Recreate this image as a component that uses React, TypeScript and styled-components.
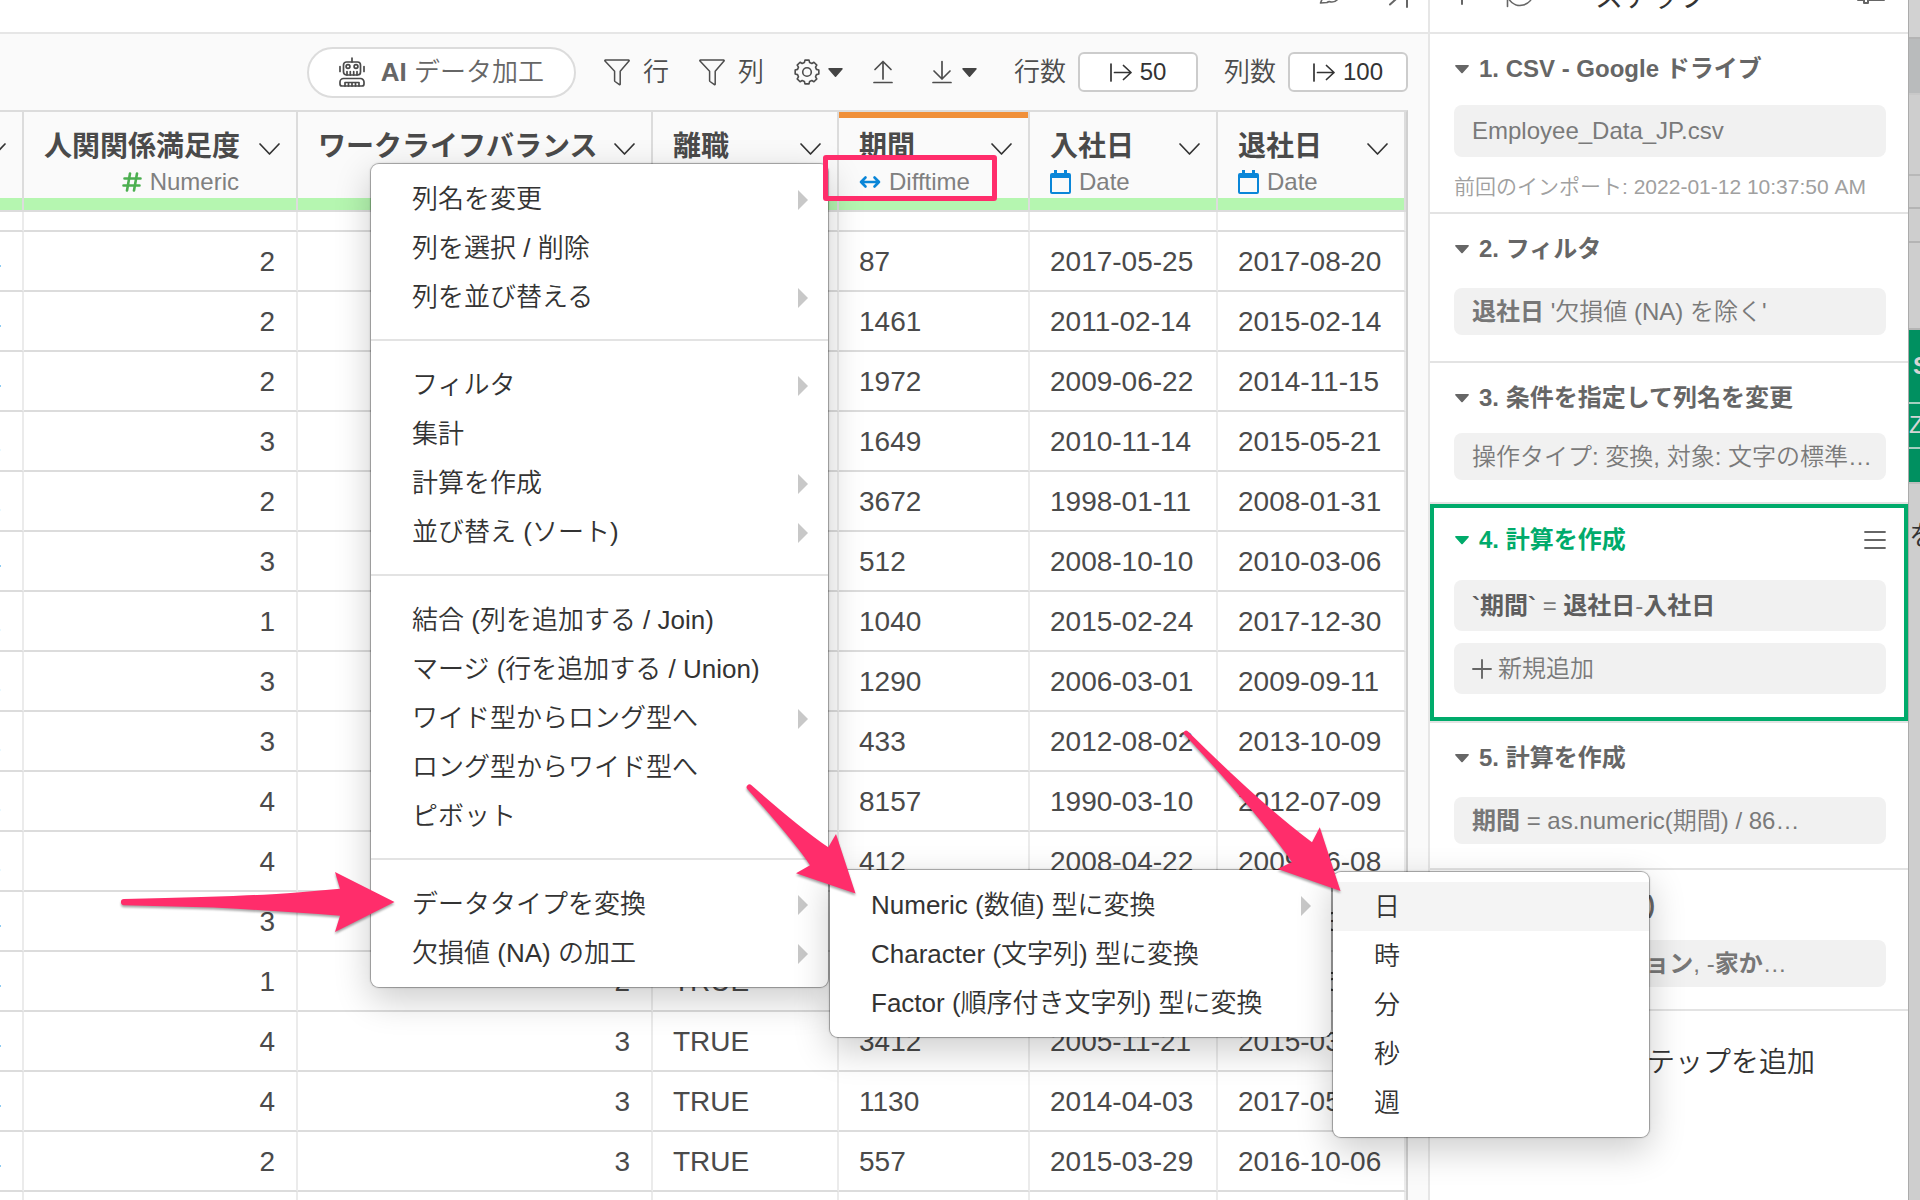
import React from "react";
import styled, { createGlobalStyle, css } from "styled-components";

const FONT = `"Liberation Sans", "Noto Sans CJK JP", sans-serif`;
const PINK = "#ff2d6b";
const GREEN = "#00ab6b";

const GlobalStyle = createGlobalStyle`
  *, *::before, *::after { box-sizing: border-box; }
  body { margin: 0; overflow: hidden; font-family: ${FONT}; font-weight: 350; background: #fff; }
  button { font: inherit; color: inherit; background: none; border: 0; padding: 0; text-align: left; cursor: pointer; }
  b { font-weight: 700; }
  ul { list-style: none; margin: 0; padding: 0; }
  svg { display: block; flex: none; }
`;

/* ---------- page frame ---------- */

const Page = styled.div`
  position: relative;
  display: flex;
  height: 100vh;
  overflow: hidden;
`;

const Main = styled.main`
  flex: 1;
  min-width: 0;
  display: flex;
  flex-direction: column;
  border-right: 2px solid #e6e6e6;
  background: #fafafa;
`;

const TopBar = styled.header<{ $spread?: boolean }>`
  flex: none;
  display: flex;
  align-items: flex-end;
  justify-content: ${(p) => (p.$spread ? "space-between" : "flex-end")};
  gap: ${(p) => (p.$spread ? 36 : 46)}px;
  height: 34px;
  padding: 0 ${(p) => (p.$spread ? 22 : 20)}px 20px 20px;
  overflow: hidden;
  background: #fff;
  border-bottom: 2px solid #e6e6e6;
  color: #666;
`;

const PanelTitle = styled.h2`
  flex: 1;
  margin: 0;
  padding-left: 25px;
  font-size: 28px;
  line-height: 28px;
  font-weight: 400;
  color: #333;
`;

/* ---------- toolbar ---------- */

const Toolbar = styled.div`
  flex: none;
  display: flex;
  align-items: center;
  justify-content: flex-end;
  gap: 26px;
  height: 76px;
  padding-right: 20px;
  font-size: 26px;
  line-height: 40px;
  color: #4d4d4d;
  white-space: nowrap;
`;

const Pill = styled.button`
  display: flex;
  align-items: center;
  gap: 16px;
  height: 51px;
  padding: 0 30px;
  background: #fff;
  border: 2px solid #dcdcdc;
  border-radius: 26px;
  color: #666;
`;

const ToolButton = styled.button<{ $wide?: boolean }>`
  display: flex;
  align-items: center;
  gap: ${(p) => (p.$wide ? 10 : 8)}px;
  padding: 0 ${(p) => (p.$wide ? 11 : 2)}px;
`;

const FilterButton = styled(ToolButton)`
  gap: 13px;
`;

const CountField = styled.div`
  display: flex;
  align-items: center;
  gap: 12px;
`;

const CountButton = styled.button`
  display: flex;
  align-items: center;
  justify-content: center;
  gap: 8px;
  width: 120px;
  height: 40px;
  background: #fff;
  border: 2px solid #ccc;
  border-radius: 6px;
  font-size: 24px;
  line-height: 36px;
  color: #333;
`;

/* ---------- data table ---------- */

const TableFrame = styled.div`
  flex: 1;
  min-height: 0;
  display: flex;
  justify-content: flex-end;
  margin-right: 20px;
  overflow: hidden;
  border-top: 2px solid #dcdcdc;
  border-right: 2px solid #d0d0d0;
`;

const DataTable = styled.table`
  flex: none;
  align-self: flex-start;
  table-layout: fixed;
  width: 1656px;
  border-collapse: separate;
  border-spacing: 0;
  background: #fff;
  color: #4a4a4a;
`;

const HeadCell = styled.th`
  padding: 0;
  background: #fafafa;
  border-right: 2px solid #dcdcdc;
  border-bottom: 2px solid #dcdcdc;
  font-weight: inherit;
`;

const HeadBody = styled.div<{ $active?: boolean; $right?: boolean }>`
  display: flex;
  gap: 20px;
  height: 86px;
  padding: 11px 16px 0 20px;
  border-top: 6px solid ${(p) => (p.$active ? "#f0903a" : "transparent")};
  text-align: ${(p) => (p.$right ? "right" : "left")};
  white-space: nowrap;
`;

const HeadText = styled.div`
  flex: 1;
  min-width: 0;
`;

const ColumnName = styled.div`
  font-size: 28px;
  line-height: 36px;
  font-weight: 700;
`;

const ColumnType = styled.div<{ $right?: boolean }>`
  display: flex;
  align-items: center;
  justify-content: ${(p) => (p.$right ? "flex-end" : "flex-start")};
  gap: 8px;
  margin-top: 3px;
  font-size: 24px;
  line-height: 28px;
  color: #808080;
`;

const HeadMenuButton = styled.button`
  align-self: flex-start;
  padding-top: 14px;
`;

const FillBar = styled.div`
  height: 12px;
  background: #b5f6b0;
`;

const Cell = styled.td<{ $right?: boolean; $short?: boolean }>`
  height: ${(p) => (p.$short ? 20 : 60)}px;
  padding: ${(p) => (p.$short ? 0 : 2)}px 21px 0 20px;
  border-right: 2px solid #ebebeb;
  border-bottom: 2px solid #dcdcdc;
  font-size: 28px;
  line-height: 32px;
  text-align: ${(p) => (p.$right ? "right" : "left")};
  white-space: nowrap;
`;

/* ---------- steps panel ---------- */

const Panel = styled.aside`
  flex: none;
  display: flex;
  flex-direction: column;
  width: 478px;
  background: #fff;
  color: #666;
`;

const Step = styled.section<{ $gap: number; $bottom: number; $selected?: boolean }>`
  display: flex;
  flex-direction: column;
  padding: ${(p) => (p.$selected ? 18 : 17)}px 22px ${(p) => p.$bottom}px 24px;
  border-bottom: 2px solid #e3e3e3;
  ${(p) =>
    p.$selected &&
    css`
      box-shadow: inset 0 0 0 4px ${GREEN};
    `}
  & > ul {
    margin-top: ${(p) => p.$gap}px;
  }
`;

const StepHead = styled.div`
  display: flex;
  align-items: center;
  justify-content: space-between;
`;

const StepTitle = styled.h3<{ $selected?: boolean }>`
  margin: 0;
  font-size: 24px;
  line-height: 36px;
  font-weight: 700;
  color: ${(p) => (p.$selected ? GREEN : "#666")};
  & > button {
    display: flex;
    align-items: center;
    gap: 10px;
    padding-left: 1px;
    white-space: nowrap;
  }
`;

const ChipList = styled.ul`
  display: flex;
  flex-direction: column;
  gap: 12px;
`;

const Chip = styled.button<{ $height: number; $strong?: boolean }>`
  display: block;
  width: 100%;
  height: ${(p) => p.$height}px;
  padding: 0 12px 0 18px;
  overflow: hidden;
  white-space: nowrap;
  background: #f1f1f1;
  border-radius: 8px;
  font-size: 24px;
  line-height: 36px;
  color: #7a7a7a;
  & > b {
    color: ${(p) => (p.$strong ? "#5e5e5e" : "#777")};
  }
`;

const ChipRow = styled.span`
  display: flex;
  align-items: center;
  gap: 6px;
`;

const ImportNote = styled.p`
  margin: 16px 0 0;
  font-size: 21px;
  line-height: 28px;
  color: #a0a0a0;
  white-space: nowrap;
`;

const AddStep = styled.button`
  display: flex;
  align-items: center;
  gap: 12px;
  padding: 32px 0 0 153px;
  font-size: 28px;
  line-height: 40px;
  color: #333;
  white-space: nowrap;
`;

/* ---------- window behind ---------- */

const Behind = styled.div`
  flex: none;
  display: flex;
  flex-direction: column;
  width: 12px;
  overflow: hidden;
  background: #cecece;
  border-left: 1px solid #ababab;
`;

const Band = styled.div<{ $h: number; $bg?: string; $line?: string; $ink?: string }>`
  flex: none;
  height: ${(p) => p.$h}px;
  padding-left: 4px;
  overflow: hidden;
  background: ${(p) => p.$bg || "transparent"};
  border-bottom: 2px solid ${(p) => p.$line || "transparent"};
  color: ${(p) => p.$ink || "#ccc"};
  font-size: 24px;
  line-height: 72px;
  white-space: nowrap;
`;

const SmallBand = styled(Band)`
  padding-left: 0;
  line-height: 42px;
`;

const TextBand = styled(Band)`
  padding-left: 0;
  font-size: 28px;
  line-height: 106px;
`;

/* ---------- floating menus ---------- */

const Menu = styled.ul<{ $top: number; $right: number; $width: number }>`
  position: absolute;
  top: ${(p) => p.$top}px;
  right: ${(p) => p.$right}px;
  width: ${(p) => p.$width}px;
  padding: 10px 0;
  background: #fff;
  background-clip: padding-box;
  border: 1px solid rgba(0, 0, 0, 0.22);
  border-radius: 9px;
  box-shadow: 0 12px 36px rgba(0, 0, 0, 0.2), 0 0 2px rgba(0, 0, 0, 0.16);
  font-size: 26px;
  color: #333;
`;

const MenuItem = styled.button<{ $hover?: boolean }>`
  display: flex;
  align-items: center;
  justify-content: space-between;
  width: 100%;
  height: 49px;
  padding: 2px 20px 0 41px;
  line-height: 47px;
  white-space: nowrap;
  background: ${(p) => (p.$hover ? "#f4f4f4" : "transparent")};
`;

const MenuRule = styled.li`
  height: 2px;
  margin: 18px 0 19px;
  background: #e3e3e3;
`;

/* ---------- annotations ---------- */

const Highlight = styled.div`
  position: absolute;
  top: 155px;
  right: 923px;
  width: 174px;
  height: 46px;
  border: 5px solid ${PINK};
  border-radius: 3px;
  pointer-events: none;
`;

const Annotations = styled.svg`
  position: absolute;
  top: 0;
  right: 0;
  pointer-events: none;
  filter: drop-shadow(0 2px 1px rgba(0, 0, 0, 0.35));
`;

/* ---------- icons ---------- */

const Stroke = (p: { w: number; h: number; sw?: number; color?: string; children: React.ReactNode }) => (
  <svg
    width={p.w}
    height={p.h}
    viewBox={`0 0 ${p.w} ${p.h}`}
    fill="none"
    stroke={p.color || "currentColor"}
    strokeWidth={p.sw || 1.6}
    strokeLinecap="round"
    strokeLinejoin="round"
    aria-hidden="true"
  >
    {p.children}
  </svg>
);

const RobotIcon = () => (
  <Stroke w={26} h={30} sw={1.7} color="#4a4a4a">
    <path d="M13 1v4M1 9.5v5M25 9.5v5" />
    <rect x="4.5" y="5" width="17" height="13" rx="3" />
    <circle cx="9" cy="9.5" r="1.9" />
    <circle cx="17" cy="9.5" r="1.9" />
    <path d="M8 14.5V18M11.3 14.5V18M14.7 14.5V18M18 14.5V18" />
    <path d="M4.5 21.500h17a3.500 3.500 0 0 1 3.500 3.500v2a2 2 0 0 1-2 2H3a2 2 0 0 1-2-2v-2a3.500 3.500 0 0 1 3.500-3.500z" />
    <path d="M6 29v-3.500h14V29M9.500 25.500V29M13 25.500V29M16.500 25.500V29" />
  </Stroke>
);

const FilterIcon = () => (
  <Stroke w={26} h={27} sw={1.5}>
    <path d="M1.500 1h23a.6.6 0 0 1 .5 1L16.200 12.200V25.200a.5.5 0 0 1-.8.4L11 22.500a1 1 0 0 1-.4-.8V12.200L1 2a.6.6 0 0 1 .5-1z" />
  </Stroke>
);

const gearPath = (() => {
  const pts: string[] = [];
  const n = 8;
  for (let i = 0; i < n; i++) {
    const a = (i / n) * Math.PI * 2 - Math.PI / 2;
    const at = (r: number, d: number) =>
      `${(13 + r * Math.cos(a + d)).toFixed(2)} ${(13 + r * Math.sin(a + d)).toFixed(2)}`;
    pts.push(`${i ? "L" : "M"}${at(9.8, -0.27)}L${at(12, -0.17)}L${at(12, 0.17)}L${at(9.8, 0.27)}`);
  }
  return pts.join("") + "Z";
})();

const GearIcon = () => (
  <Stroke w={26} h={26} sw={1.6}>
    <path d={gearPath} />
    <circle cx="13" cy="13" r="4.300" />
  </Stroke>
);

const ToolCaret = () => (
  <svg width="15" height="9" viewBox="0 0 15 9" fill="#444" aria-hidden="true">
    <path d="M1 0h13a.8.8 0 0 1 .6 1.300L8.300 8.500a1 1 0 0 1-1.600 0L.4 1.300A.8.8 0 0 1 1 0z" />
  </svg>
);

const UploadIcon = () => (
  <Stroke w={20} h={24} sw={1.7}>
    <path d="M10 19V1.500M2 9.500l8-8 8 8M1 22.500h18" />
  </Stroke>
);

const DownloadIcon = () => (
  <Stroke w={20} h={24} sw={1.7}>
    <path d="M10 1.500V19M2 11l8 8 8-8M1 22.500h18" />
  </Stroke>
);

const RangeIcon = () => (
  <Stroke w={22} h={19} sw={1.7}>
    <path d="M1 1v17M4.500 9.500H21M13.500 2.500l7.500 7-7.500 7" />
  </Stroke>
);

const ChevronIcon = () => (
  <Stroke w={21} h={12} sw={1.7} color="#333">
    <path d="M1 1l9.500 10L20 1" />
  </Stroke>
);

const HashIcon = () => (
  <Stroke w={20} h={20} sw={2.600} color="#4caf50">
    <path d="M8 1.500L5 18.500M15 1.500L12 18.500M2.500 6.500H18.500M1.500 13.500H17.500" />
  </Stroke>
);

const DifftimeIcon = () => (
  <Stroke w={22} h={14} sw={2.600} color="#0a86d8">
    <path d="M2 7H20M6.500 2.500L2 7l4.500 4.500M15.500 2.500L20 7l-4.500 4.500" />
  </Stroke>
);

const DateIcon = () => (
  <svg width="21" height="24" viewBox="0 0 21 24" fill="#0a86d8" aria-hidden="true">
    <path d="M4 0h3v3h7V0h3v3h2a2 2 0 0 1 2 2v17a2 2 0 0 1-2 2H2a2 2 0 0 1-2-2V5a2 2 0 0 1 2-2h2zM2 8v14h17V8z" fillRule="evenodd" />
  </svg>
);

const StepCaret = () => (
  <svg width="14" height="9" viewBox="0 0 14 9" fill="currentColor" aria-hidden="true">
    <path d="M.8 0h12.400a.7.7 0 0 1 .5 1.200L7.700 8a1 1 0 0 1-1.400 0L.3 1.200A.7.7 0 0 1 .8 0z" />
  </svg>
);

const ListIcon = () => (
  <Stroke w={22} h={18} sw={1.800} color="#666">
    <path d="M1 1h20M1 9h20M1 17h20" />
  </Stroke>
);

const PlusIcon = ({ size }: { size: number }) => (
  <Stroke w={size} h={size} sw={1.900} color="#666">
    <path d={`M${size / 2} 1V${size - 1}M1 ${size / 2}H${size - 1}`} />
  </Stroke>
);

const SubmenuArrow = () => (
  <svg width="10" height="20" viewBox="0 0 10 20" fill="#c8c8c8" aria-hidden="true">
    <path d="M0 0l10 10L0 20z" />
  </svg>
);

const CommentIcon = () => (
  <Stroke w={24} h={22}>
    <path d="M5 7L2.500 13 9 12.500Q11 11 13 12 17 12.500 20 9" />
  </Stroke>
);

const ExpandIcon = () => (
  <Stroke w={20} h={24} sw={2}>
    <path d="M2 16.500L17 3M19 1V19" />
  </Stroke>
);

const CollapseIcon = () => (
  <Stroke w={20} h={24} sw={2}>
    <path d="M12 2V16" />
  </Stroke>
);

const RefreshIcon = () => (
  <Stroke w={28} h={26}>
    <path d="M27 8A13 13 0 0 1 3.500 14M1.500 20.500V12.500h9" />
  </Stroke>
);

const PinIcon = () => (
  <Stroke w={30} h={28} sw={2}>
    <path d="M28 16H12v3H8v-3H2" />
  </Stroke>
);

/* ---------- data ---------- */

type Column = { name: string; type: string; width: number; right?: boolean; active?: boolean };

const columns: Column[] = [
  { name: "職務満足度", type: "Numeric", width: 274, right: true },
  { name: "人関関係満足度", type: "Numeric", width: 274, right: true },
  { name: "ワークライフバランス", type: "Numeric", width: 355, right: true },
  { name: "離職", type: "Logical", width: 186 },
  { name: "期間", type: "Difftime", width: 191, active: true },
  { name: "入社日", type: "Date", width: 188 },
  { name: "退社日", type: "Date", width: 188 },
];

const rows: string[][] = [
  ["4", "2", "1", "TRUE", "87", "2017-05-25", "2017-08-20"],
  ["4", "2", "3", "TRUE", "1461", "2011-02-14", "2015-02-14"],
  ["4", "2", "3", "TRUE", "1972", "2009-06-22", "2014-11-15"],
  ["1", "3", "3", "TRUE", "1649", "2010-11-14", "2015-05-21"],
  ["1", "2", "3", "TRUE", "3672", "1998-01-11", "2008-01-31"],
  ["4", "3", "2", "TRUE", "512", "2008-10-10", "2010-03-06"],
  ["1", "1", "3", "TRUE", "1040", "2015-02-24", "2017-12-30"],
  ["1", "3", "3", "TRUE", "1290", "2006-03-01", "2009-09-11"],
  ["1", "3", "2", "TRUE", "433", "2012-08-02", "2013-10-09"],
  ["1", "4", "3", "TRUE", "8157", "1990-03-10", "2012-07-09"],
  ["1", "4", "3", "TRUE", "412", "2008-04-22", "2009-06-08"],
  ["4", "3", "3", "TRUE", "1846", "2010-02-11", "2015-03-03"],
  ["4", "1", "2", "TRUE", "730", "2012-05-14", "2014-05-14"],
  ["4", "4", "3", "TRUE", "3412", "2005-11-21", "2015-03-26"],
  ["4", "4", "3", "TRUE", "1130", "2014-04-03", "2017-05-07"],
  ["4", "2", "3", "TRUE", "557", "2015-03-29", "2016-10-06"],
  ["4", "3", "3", "TRUE", "921", "2011-06-17", "2013-12-24"],
];

const typeIcon = (type: string) =>
  type === "Numeric" ? <HashIcon /> : type === "Difftime" ? <DifftimeIcon /> : type === "Date" ? <DateIcon /> : null;

type Entry = { label: string; sub?: boolean; hover?: boolean } | null;

const columnMenu: Entry[] = [
  { label: "列名を変更", sub: true },
  { label: "列を選択 / 削除" },
  { label: "列を並び替える", sub: true },
  null,
  { label: "フィルタ", sub: true },
  { label: "集計" },
  { label: "計算を作成", sub: true },
  { label: "並び替え (ソート)", sub: true },
  null,
  { label: "結合 (列を追加する / Join)" },
  { label: "マージ (行を追加する / Union)" },
  { label: "ワイド型からロング型へ", sub: true },
  { label: "ロング型からワイド型へ" },
  { label: "ピボット" },
  null,
  { label: "データタイプを変換", sub: true },
  { label: "欠損値 (NA) の加工", sub: true },
];

const convertMenu: Entry[] = [
  { label: "Numeric (数値) 型に変換", sub: true },
  { label: "Character (文字列) 型に変換" },
  { label: "Factor (順序付き文字列) 型に変換" },
];

const unitMenu: Entry[] = [
  { label: "日", hover: true },
  { label: "時" },
  { label: "分" },
  { label: "秒" },
  { label: "週" },
];

const PopupMenu = (p: { top: number; right: number; width: number; entries: Entry[] }) => (
  <Menu $top={p.top} $right={p.right} $width={p.width}>
    {p.entries.map((e, i) =>
      e ? (
        <li key={i}>
          <MenuItem type="button" $hover={e.hover}>
            <span>{e.label}</span>
            {e.sub && <SubmenuArrow />}
          </MenuItem>
        </li>
      ) : (
        <MenuRule key={i} role="separator" />
      )
    )}
  </Menu>
);

const StepBlock = (p: {
  title: string;
  gap: number;
  bottom: number;
  selected?: boolean;
  chipHeight?: number;
  chips: React.ReactNode[];
  note?: string;
}) => (
  <Step $gap={p.gap} $bottom={p.bottom} $selected={p.selected}>
    <StepHead>
      <StepTitle $selected={p.selected}>
        <button type="button">
          <StepCaret />
          {p.title}
        </button>
      </StepTitle>
      {p.selected && (
        <button type="button" aria-label="メニュー">
          <ListIcon />
        </button>
      )}
    </StepHead>
    <ChipList>
      {p.chips.map((c, i) => (
        <li key={i}>
          <Chip type="button" $height={p.chipHeight || 47} $strong={p.selected}>
            {c}
          </Chip>
        </li>
      ))}
    </ChipList>
    {p.note && <ImportNote>{p.note}</ImportNote>}
  </Step>
);

export default function App() {
  return (
    <Page>
      <GlobalStyle />
      <Main>
        <TopBar>
          <CommentIcon />
          <ExpandIcon />
        </TopBar>
        <Toolbar>
          <Pill type="button">
            <RobotIcon />
            <span>
              <b>AI</b> データ加工
            </span>
          </Pill>
          <FilterButton type="button">
            <FilterIcon />行
          </FilterButton>
          <FilterButton type="button">
            <FilterIcon />列
          </FilterButton>
          <ToolButton type="button" aria-label="設定">
            <GearIcon />
            <ToolCaret />
          </ToolButton>
          <ToolButton type="button" aria-label="アップロード">
            <UploadIcon />
          </ToolButton>
          <ToolButton type="button" aria-label="ダウンロード" $wide>
            <DownloadIcon />
            <ToolCaret />
          </ToolButton>
          <CountField>
            <span id="row-count">行数</span>
            <CountButton type="button" aria-describedby="row-count">
              <RangeIcon />
              50
            </CountButton>
          </CountField>
          <CountField>
            <span id="col-count">列数</span>
            <CountButton type="button" aria-describedby="col-count">
              <RangeIcon />
              100
            </CountButton>
          </CountField>
        </Toolbar>
        <TableFrame>
          <DataTable>
            <colgroup>
              {columns.map((c) => (
                <col key={c.name} width={c.width} />
              ))}
            </colgroup>
            <thead>
              <tr>
                {columns.map((c) => (
                  <HeadCell key={c.name} scope="col">
                    <HeadBody $active={c.active} $right={c.right}>
                      <HeadText>
                        <ColumnName>{c.name}</ColumnName>
                        <ColumnType $right={c.right}>
                          {typeIcon(c.type)}
                          {c.type}
                        </ColumnType>
                      </HeadText>
                      <HeadMenuButton type="button" aria-label={c.name}>
                        <ChevronIcon />
                      </HeadMenuButton>
                    </HeadBody>
                    <FillBar />
                  </HeadCell>
                ))}
              </tr>
            </thead>
            <tbody>
              <tr>
                {columns.map((c) => (
                  <Cell key={c.name} $short />
                ))}
              </tr>
              {rows.map((r, i) => (
                <tr key={i}>
                  {r.map((v, j) => (
                    <Cell key={j} $right={columns[j].right}>
                      {v}
                    </Cell>
                  ))}
                </tr>
              ))}
            </tbody>
          </DataTable>
        </TableFrame>
      </Main>

      <Panel>
        <TopBar $spread>
          <CollapseIcon />
          <RefreshIcon />
          <PanelTitle>ステップ</PanelTitle>
          <PinIcon />
        </TopBar>
        <StepBlock
          title="1. CSV - Google ドライブ"
          gap={18}
          bottom={11}
          chipHeight={52}
          chips={["Employee_Data_JP.csv"]}
          note="前回のインポート: 2022-01-12 10:37:50 AM"
        />
        <StepBlock
          title="2. フィルタ"
          gap={21}
          bottom={26}
          chips={[
            <>
              <b>退社日</b> '欠損値 (NA) を除く'
            </>,
          ]}
        />
        <StepBlock
          title="3. 条件を指定して列名を変更"
          gap={17}
          bottom={22}
          chips={["操作タイプ: 変換, 対象: 文字の標準…"]}
        />
        <StepBlock
          title="4. 計算を作成"
          gap={22}
          bottom={27}
          selected
          chipHeight={51}
          chips={[
            <>
              <b>`期間`</b> = <b>退社日</b>-<b>入社日</b>
            </>,
            <ChipRow>
              <PlusIcon size={20} />
              新規追加
            </ChipRow>,
          ]}
        />
        <StepBlock
          title="5. 計算を作成"
          gap={21}
          bottom={24}
          chips={[
            <>
              <b>期間</b> = as.numeric(期間) / 86…
            </>,
          ]}
        />
        <StepBlock
          title="6. 列を選択 (R2)"
          gap={17}
          bottom={22}
          chips={[
            <>
              -<b>役職名</b>, -<b>ポジション</b>, -<b>家か</b>…
            </>,
          ]}
        />
        <AddStep type="button">
          <PlusIcon size={24} />
          ステップを追加
        </AddStep>
      </Panel>

      <Behind>
        <Band $h={39} $bg="#d2d2d2" $line="#b4b4b4" />
        <Band $h={56} $bg="#b9bbbc" $line="#c8c8c8" />
        <Band $h={81} $line="#b8b8b8" />
        <Band $h={33} $line="#b4b4b4" />
        <Band $h={34} $line="#b4b4b4" />
        <Band $h={87} $line="#b4b4b4" />
        <Band $h={74} $bg="#009060" $line="#a5cfc0" $ink="#d5d5d5">
          <b>S</b>
        </Band>
        <SmallBand $h={45} $bg="#009060" $line="#a5cfc0" $ink="#d5d5d5">
          Z-
        </SmallBand>
        <Band $h={35} $bg="#009060" $line="#bdbdbd" />
        <TextBand $h={108} $ink="#333">
          を
        </TextBand>
      </Behind>

      <PopupMenu top={163} right={1091} width={459} entries={columnMenu} />
      <PopupMenu top={869} right={588} width={503} entries={convertMenu} />
      <PopupMenu top={871} right={270} width={318} entries={unitMenu} />

      <Highlight />
      <Annotations width="1920" height="1200" viewBox="0 0 1920 1200" fill={PINK} aria-hidden="true">
        <path d="M124 899Q250 896.500 297 892.500L340 888.700 335 872 394.500 902 335 932 340 915.700Q280 911 213 907.500L124 905.200A3.100 3.100 0 0 1 124 899z" />
        <path d="M751.500 785.200Q800 828 828.300 847.300L836 834 855.500 893.500 796 873.300 810 865.300Q797 845 747.500 789.200A2.800 2.800 0 0 1 751.500 785.200z" />
        <path d="M1187.500 731Q1262 805 1312 842.300L1319.800 827.300 1340.500 891 1277.700 869 1291.900 862Q1262 818 1183.500 733.500A2.600 2.600 0 0 1 1187.500 731z" />
      </Annotations>
    </Page>
  );
}
